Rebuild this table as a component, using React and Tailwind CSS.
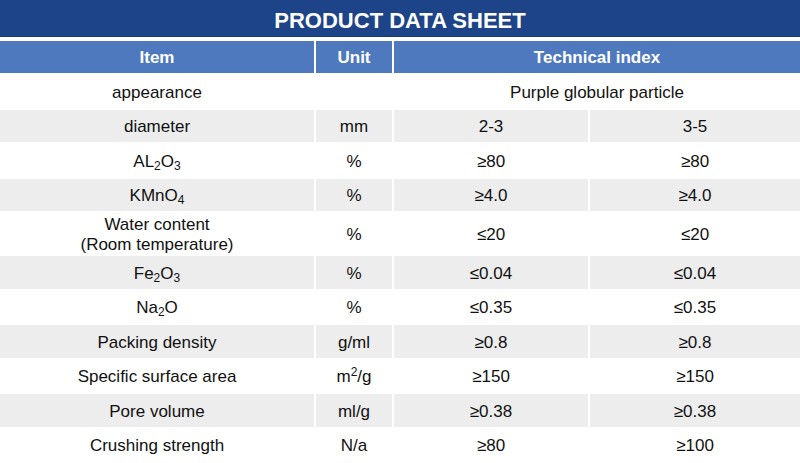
import React from "react";

const Sub = ({ children }) => (
  <sub className="text-[12px] align-baseline relative top-[3px]">{children}</sub>
);

const rows = [
  { item: "diameter", unit: "mm", a: "2-3", b: "3-5", grey: true },
  { item: <>AL<Sub>2</Sub>O<Sub>3</Sub></>, unit: "%", a: "≥80", b: "≥80" },
  { item: <>KMnO<Sub>4</Sub></>, unit: "%", a: "≥4.0", b: "≥4.0", grey: true },
  { item: <>Water content<br />(Room temperature)</>, unit: "%", a: "≤20", b: "≤20", tall: true },
  { item: <>Fe<Sub>2</Sub>O<Sub>3</Sub></>, unit: "%", a: "≤0.04", b: "≤0.04", grey: true },
  { item: <>Na<Sub>2</Sub>O</>, unit: "%", a: "≤0.35", b: "≤0.35" },
  { item: "Packing density", unit: "g/ml", a: "≥0.8", b: "≥0.8", grey: true },
  { item: "Specific surface area", unit: <>m<sup className="text-[12px] align-baseline relative -top-[6px]">2</sup>/g</>, a: "≥150", b: "≥150" },
  { item: "Pore volume", unit: "ml/g", a: "≥0.38", b: "≥0.38", grey: true },
  { item: "Crushing strength", unit: "N/a", a: "≥80", b: "≥100" },
];

export default function App() {
  const cell = (grey, tall) =>
    `${grey ? "bg-[#ededed]" : "bg-white"} ${tall ? "h-[41px]" : "h-[32.5px]"} flex items-center justify-center text-center leading-[19.5px] pt-[2px]`;
  return (
    <div
      className="w-[800px] h-[463px] overflow-hidden bg-white text-[17px] text-[#111111]"
      style={{ fontFamily: '"Liberation Sans", Arial, sans-serif' }}
    >
      <div className="h-[37px] bg-[#1d4488] border-b border-[#173a76] flex items-center justify-center pt-[4px] text-white font-bold text-[22px]">
        PRODUCT DATA SHEET
      </div>
      <div className="mt-[4px] grid grid-cols-[314px_76px_194px_1fr] gap-[2px]">
        <div className="h-[32px] bg-[#4e79bf] text-white font-bold flex items-center justify-center pt-[2px]">Item</div>
        <div className="h-[32px] bg-[#4e79bf] text-white font-bold flex items-center justify-center pt-[2px]">Unit</div>
        <div className="col-span-2 h-[32px] bg-[#4e79bf] text-white font-bold flex items-center justify-center pt-[2px]">Technical index</div>

        <div className={cell(false)}>appearance</div>
        <div className={cell(false)}></div>
        <div className={`col-span-2 ${cell(false)}`}>Purple globular particle</div>

        {rows.map((r, i) => (
          <React.Fragment key={i}>
            <div className={cell(r.grey, r.tall)}><span>{r.item}</span></div>
            <div className={cell(r.grey, r.tall)}><span>{r.unit}</span></div>
            <div className={cell(r.grey, r.tall)}>{r.a}</div>
            <div className={cell(r.grey, r.tall)}>{r.b}</div>
          </React.Fragment>
        ))}
      </div>
    </div>
  );
}
